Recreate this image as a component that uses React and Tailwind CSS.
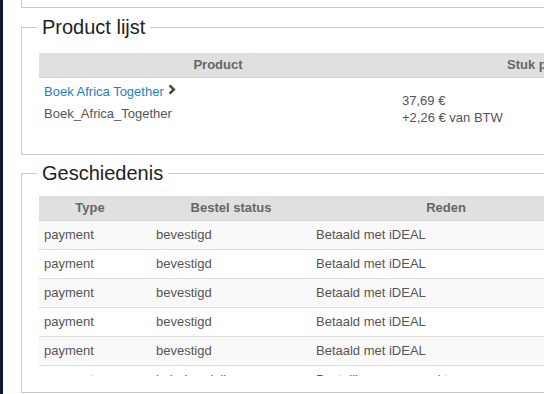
const history = [
  { type: 'payment', status: 'bevestigd', reason: 'Betaald met iDEAL' },
  { type: 'payment', status: 'bevestigd', reason: 'Betaald met iDEAL' },
  { type: 'payment', status: 'bevestigd', reason: 'Betaald met iDEAL' },
  { type: 'payment', status: 'bevestigd', reason: 'Betaald met iDEAL' },
  { type: 'payment', status: 'bevestigd', reason: 'Betaald met iDEAL' },
  { type: 'payment', status: 'in behandeling', reason: 'Bestelling aangemaakt' },
];

const Chevron = () => (
  <svg width="8" height="11" viewBox="0 0 8 11" className="ml-[4px] mt-[1px]">
    <path d="M1.6 1.4 L5.8 5.5 L1.6 9.6" fill="none" stroke="#4a4a4a" strokeWidth="2.6" strokeLinejoin="miter" />
  </svg>
);

const App = () => {
  return (
    <div
      className="flex w-[544px] h-[394px] overflow-hidden bg-white text-[13px] text-[#555]"
      style={{ fontFamily: '"Liberation Sans", Arial, sans-serif' }}
    >
      {/* dark sidebar edge */}
      <div className="w-[3px] shrink-0 bg-[#0b1733]" />

      <div className="pl-[18px] shrink-0 w-[720px]">
        {/* previous panel, scrolled out of view */}
        <div className="h-[8px] border-l border-b border-[#cccccc]" />

        <fieldset className="mt-[7px] border border-[#cccccc] pl-[15px] pb-[14px]">
          <legend className="px-[5px] text-[20px] leading-[24px] text-[#222]">Product lijst</legend>
          <div className="ml-[2px] mt-[14px]">
            <div className="grid grid-cols-[358px_1fr] h-[25px] bg-[#e0e0e0] border-b border-[#d2d2d2] font-bold text-[#666]">
              <div className="flex items-center justify-center">Product</div>
              <div className="flex items-center pl-[110px]">Stuk prijs</div>
            </div>
            <div className="grid grid-cols-[358px_1fr] h-[62px]">
              <div className="pl-[5px] pt-[5px]">
                <div className="flex items-start h-[18px] leading-[18px]">
                  <span className="text-[#1b7fc4]">Boek Africa Together</span>
                  <Chevron />
                </div>
                <div className="mt-[4px] leading-[18px]">Boek_Africa_Together</div>
              </div>
              <div className="pl-[5px] pt-[14px] leading-[17px]">
                <div>37,69 €</div>
                <div>+2,26 € van BTW</div>
              </div>
            </div>
          </div>
        </fieldset>

        <fieldset className="mt-[6px] border border-[#cccccc] pl-[15px] pb-[16px]">
          <legend className="px-[5px] text-[20px] leading-[24px] text-[#222]">Geschiedenis</legend>
          <div className="ml-[2px] mt-[11px] h-[180px] overflow-hidden">
            <div className="grid grid-cols-[102px_180px_250px] h-[25px] bg-[#e0e0e0] border-b border-[#d2d2d2] font-bold text-[#666]">
              <div className="flex items-center justify-center">Type</div>
              <div className="flex items-center justify-center">Bestel status</div>
              <div className="flex items-center justify-center">Reden</div>
            </div>
            {history.map((row, i) => (
              <div
                key={i}
                className={`grid grid-cols-[112px_160px_1fr] h-[29px] border-b border-[#dddddd] items-center ${
                  i % 2 === 0 ? 'bg-[#f9f9f9]' : 'bg-white'
                }`}
              >
                <div className="pl-[5px]">{row.type}</div>
                <div className="pl-[5px]">{row.status}</div>
                <div className="pl-[5px]">{row.reason}</div>
              </div>
            ))}
          </div>
        </fieldset>
      </div>
    </div>
  );
};

export default App;
